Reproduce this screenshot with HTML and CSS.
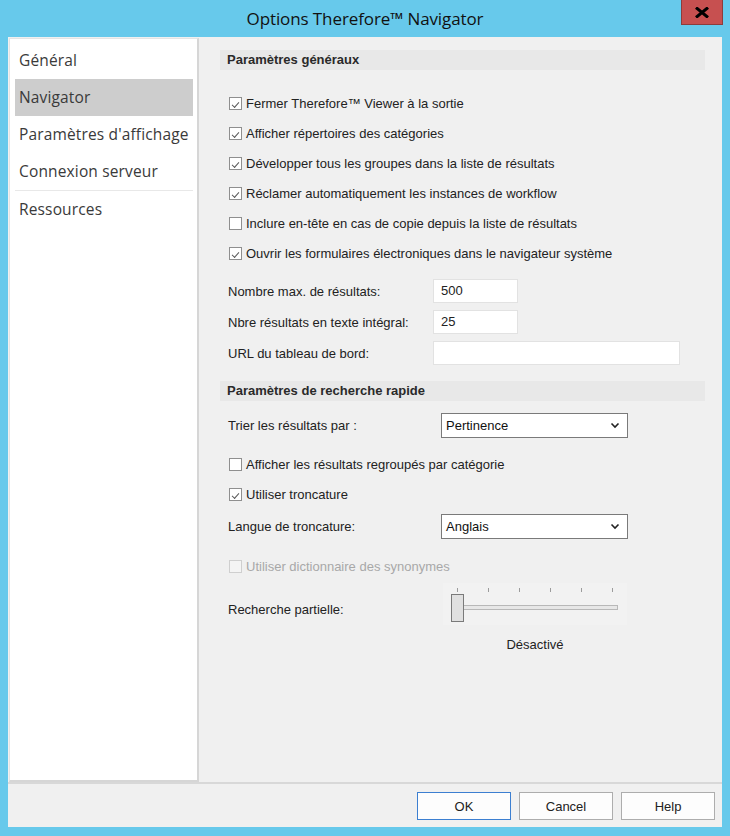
FILE: index.html
```html
<!DOCTYPE html>
<html lang="fr">
<head>
<meta charset="utf-8">
<title>Options Therefore™ Navigator</title>
<link rel="stylesheet" href="styles.css">
</head>
<body>
<div class="window">
  <div class="titlebar">
    <span class="title">Options Therefore™ Navigator</span>
    <div class="close"><svg width="14" height="11" viewBox="0 0 14 11"><path d="M1 0.5 L13 10.5 M13 0.5 L1 10.5" stroke="#000" stroke-width="3"/></svg></div>
  </div>
  <div class="client">
    <div class="main">
      <nav class="nav">
        <div class="nav-item">Général</div>
        <div class="nav-item active">Navigator</div>
        <div class="nav-item">Paramètres d'affichage</div>
        <div class="nav-item sep">Connexion serveur</div>
        <div class="nav-item">Ressources</div>
      </nav>
      <section class="content">
        <div class="band">Paramètres généraux</div>
        <div class="checks first">
          <div class="chk"><span class="box on"></span><span>Fermer Therefore™ Viewer à la sortie</span></div>
          <div class="chk"><span class="box on"></span><span>Afficher répertoires des catégories</span></div>
          <div class="chk"><span class="box on"></span><span>Développer tous les groupes dans la liste de résultats</span></div>
          <div class="chk"><span class="box on"></span><span>Réclamer automatiquement les instances de workflow</span></div>
          <div class="chk"><span class="box"></span><span>Inclure en-tête en cas de copie depuis la liste de résultats</span></div>
          <div class="chk"><span class="box on"></span><span>Ouvrir les formulaires électroniques dans le navigateur système</span></div>
        </div>
        <div class="fields">
          <div class="field"><label>Nombre max. de résultats:</label><div class="input short">500</div></div>
          <div class="field"><label>Nbre résultats en texte intégral:</label><div class="input short">25</div></div>
          <div class="field"><label>URL du tableau de bord:</label><div class="input long"></div></div>
        </div>
        <div class="band band2">Paramètres de recherche rapide</div>
        <div class="srow sort"><label>Trier les résultats par :</label><div class="select"><span>Pertinence</span><svg width="10" height="7" viewBox="0 0 10 7"><path d="M1.5 1.5 L5 5 L8.5 1.5" fill="none" stroke="#222" stroke-width="1.6"/></svg></div></div>
        <div class="checks mid">
          <div class="chk"><span class="box"></span><span>Afficher les résultats regroupés par catégorie</span></div>
          <div class="chk"><span class="box on"></span><span>Utiliser troncature</span></div>
        </div>
        <div class="srow lang"><label>Langue de troncature:</label><div class="select"><span>Anglais</span><svg width="10" height="7" viewBox="0 0 10 7"><path d="M1.5 1.5 L5 5 L8.5 1.5" fill="none" stroke="#222" stroke-width="1.6"/></svg></div></div>
        <div class="checks dis">
          <div class="chk"><span class="box"></span><span>Utiliser dictionnaire des synonymes</span></div>
        </div>
        <div class="srow partial">
          <label>Recherche partielle:</label>
          <div class="slider-wrap">
            <div class="slider">
              <div class="ticks"><i></i><i></i><i></i><i></i><i></i><i></i></div>
              <div class="track"></div>
              <div class="thumb"></div>
            </div>
            <div class="slider-val">Désactivé</div>
          </div>
        </div>
      </section>
    </div>
    <div class="footer">
      <button class="btn default">OK</button>
      <button class="btn">Cancel</button>
      <button class="btn">Help</button>
    </div>
  </div>
</div>
</body>
</html>
```
FILE: styles.css
```css
* { box-sizing: border-box; }
html, body { margin: 0; padding: 0; }
body {
  background: #67c9eb;
  width: 730px;
  height: 836px;
  overflow: hidden;
  font-family: "Liberation Sans", Arial, sans-serif;
}
.window { width: 730px; height: 836px; }
.titlebar {
  position: relative;
  height: 37px;
  display: flex;
  align-items: center;
  justify-content: center;
}
.title {
  font-family: "Open Sans", "Noto Sans", sans-serif;
  font-size: 17px;
  color: #111;
  margin-top: -1px;
  letter-spacing: -0.1px;
}
.close {
  position: absolute;
  left: 681px;
  top: 0;
  width: 42px;
  height: 25px;
  background: #c75050;
  border: 1px solid #8d3c3c;
  border-top: none;
  display: flex;
  align-items: center;
  justify-content: center;
}
.client {
  margin: 0 8px;
  width: 714px;
  height: 790px;
  background: #f0f0f0;
  display: flex;
  flex-direction: column;
}
.main { display: flex; height: 745px; }
.nav {
  margin: 1px 0 0 1px;
  width: 190px;
  height: 744px;
  background: #fff;
  border: 1px solid #e4e4e4;
  border-right: 2px solid #d6d6d6;
  border-bottom: 2px solid #d6d6d6;
  padding: 3px 4px 0 5px;
  font-family: "Open Sans", "Noto Sans", sans-serif;
  font-size: 15.5px;
  color: #3a3a3a;
}
.nav-item {
  height: 37px;
  line-height: 37px;
  padding-left: 4px;
  letter-spacing: 0.15px;
}
.nav-item.active { background: #cdcdcd; }
.nav-item.sep { border-bottom: 1px solid #e8e8e8; height: 38px; }
.content {
  flex: 1;
  padding: 13px 17px 0 21px;
  font-size: 13px;
  color: #222;
}
.band {
  height: 20px;
  line-height: 20px;
  background: #e8e8e8;
  font-weight: bold;
  padding-left: 7px;
  color: #2a2a2a;
}
.band2 { margin-top: 16px; height: 20px; line-height: 20px; }
.checks.first { margin-top: 18px; }
.checks.mid { margin-top: 11px; }
.chk {
  height: 30px;
  display: flex;
  align-items: center;
  padding-left: 9px;
  gap: 4px;
}
.box {
  width: 13px;
  height: 13px;
  border: 1px solid #8f8f8f;
  background: #fff;
  flex: none;
  position: relative;
}
.box.on::after {
  content: "";
  position: absolute;
  left: 2px;
  top: 1px;
  width: 6px;
  height: 3px;
  border-left: 1.5px solid #5a5a5a;
  border-bottom: 1.5px solid #5a5a5a;
  transform: translate(0, 3px) rotate(-48deg);
}
.dis .chk { color: #a8a8a8; }
.dis .box { border-color: #cfcfcf; background: #f4f4f4; }
.fields { margin-top: 11px; display: flex; flex-direction: column; gap: 7px; }
.field { display: flex; align-items: center; height: 24px; padding-left: 8px; }
.field label { width: 205px; }
.input {
  height: 24px;
  background: #fff;
  border: 1px solid #e2e2e2;
  padding-left: 7px;
  line-height: 22px;
}
.input.short { width: 85px; }
.input.long { width: 247px; }
.srow { display: flex; align-items: center; padding-left: 8px; }
.srow label { width: 213px; }
.sort { margin-top: 12px; height: 25px; }
.lang { margin-top: 5px; height: 25px; }
.select {
  width: 187px;
  height: 25px;
  border: 1px solid #7a7a7a;
  background: #fff;
  display: flex;
  align-items: center;
  justify-content: space-between;
  padding: 0 7px 0 4px;
  color: #111;
}
.dis { margin-top: 12px; }
.partial { margin-top: 2px; align-items: flex-start; }
.partial label { margin-top: 19px; width: 215px; }
.slider-wrap { display: flex; flex-direction: column; align-items: center; width: 184px; }
.slider {
  position: relative;
  width: 184px;
  height: 42px;
  background: #f2f2f2;
}
.ticks { display: flex; padding-left: 14px; padding-top: 5px; height: 10px; }
.ticks i { display: block; flex: none; width: 1px; height: 4px; background: #9c9c9c; margin-right: 30px; }
.track {
  position: absolute;
  left: 20px;
  top: 22px;
  width: 155px;
  height: 5px;
  background: #e7e7e7;
  border: 1px solid #b8b8b8;
}
.thumb {
  position: absolute;
  left: 8px;
  top: 11px;
  width: 13px;
  height: 28px;
  background: #e0e0e0;
  border: 1px solid #7a7a7a;
}
.slider-val { margin-top: 12px; color: #222; }
.footer {
  flex: 1;
  border-top: 2px solid #d8d8d8;
  display: flex;
  justify-content: flex-end;
  align-items: flex-start;
  padding: 8px 7px 0 0;
  gap: 8px;
}
.btn {
  width: 94px;
  height: 28px;
  background: #fdfdfd;
  border: 1px solid #adadad;
  font-family: "Liberation Sans", Arial, sans-serif;
  font-size: 13px;
  color: #222;
  padding: 0;
}
.btn.default { border-color: #3c7fd1; }
```
